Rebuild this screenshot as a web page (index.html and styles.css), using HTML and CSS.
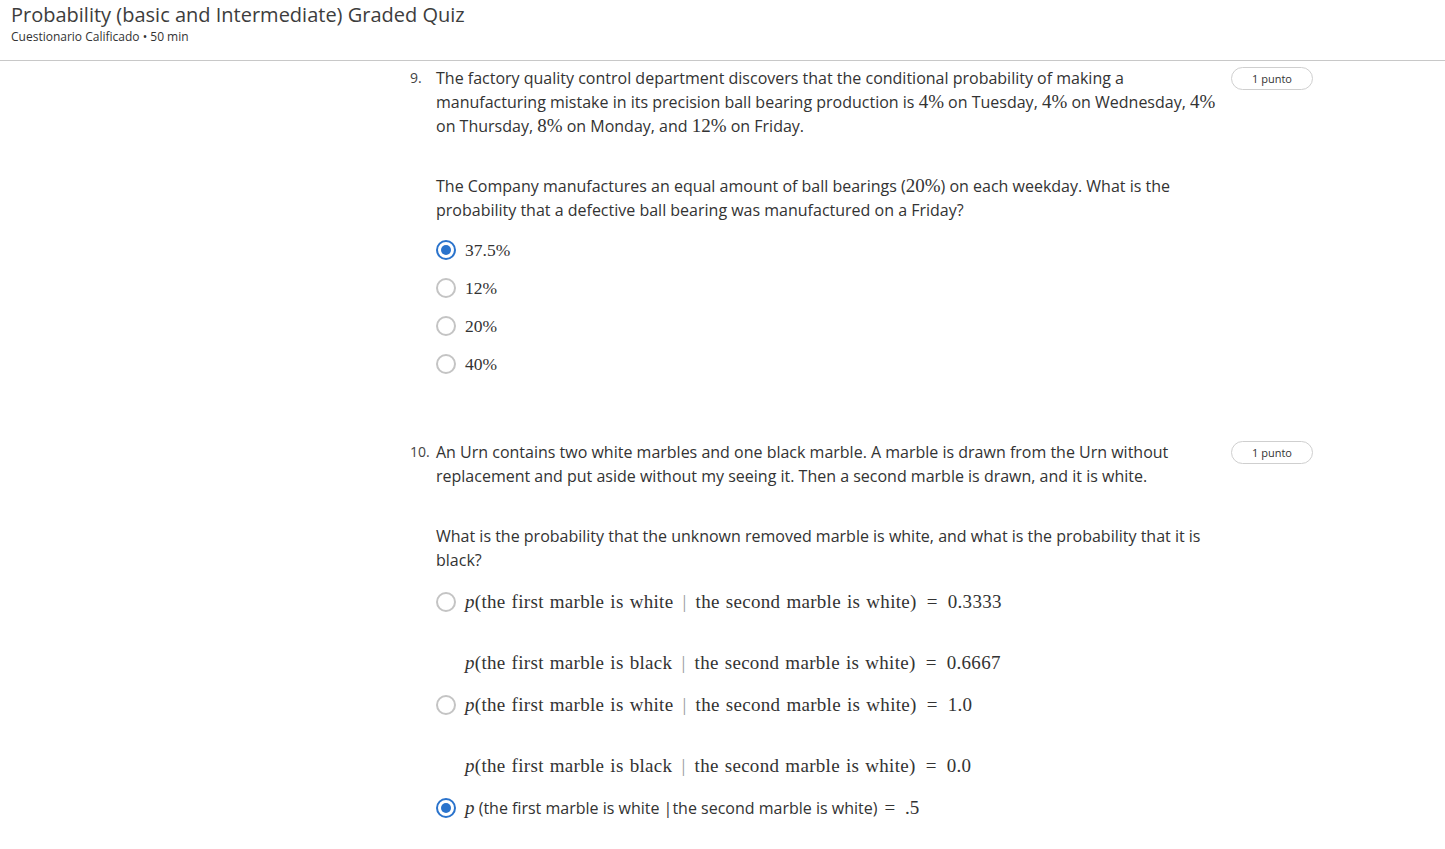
FILE: index.html
```html
<!DOCTYPE html>
<html lang="en">
<head>
<meta charset="utf-8">
<title>Probability (basic and Intermediate) Graded Quiz</title>
<link rel="stylesheet" href="styles.css">
</head>
<body>
<header class="top">
  <h1 class="title">Probability (basic and Intermediate) Graded Quiz</h1>
  <div class="sub">Cuestionario Calificado • 50 min</div>
</header>
<main class="quiz">
  <section class="q">
    <div class="num">9.</div>
    <div class="body">
      <p class="para">The factory quality control department discovers that the conditional probability of making a manufacturing mistake in its precision ball bearing production is <span class="m">4%</span> on Tuesday, <span class="m">4%</span> on Wednesday, <span class="m">4%</span> on Thursday, <span class="m">8%</span> on Monday, and <span class="m">12%</span> on Friday.</p>
      <p class="para">The Company manufactures an equal amount of ball bearings (<span class="m">20%</span>) on each weekday. What is the probability that a defective ball bearing was manufactured on a Friday?</p>
      <div class="opts">
        <div class="opt"><span class="radio on"></span><div class="otext"><p class="m">37.5%</p></div></div>
        <div class="opt"><span class="radio"></span><div class="otext"><p class="m">12%</p></div></div>
        <div class="opt"><span class="radio"></span><div class="otext"><p class="m">20%</p></div></div>
        <div class="opt"><span class="radio"></span><div class="otext"><p class="m">40%</p></div></div>
      </div>
    </div>
    <div class="pts"><span class="badge">1 punto</span></div>
  </section>

  <section class="q">
    <div class="num">10.</div>
    <div class="body">
      <p class="para">An Urn contains two white marbles and one black marble. A marble is drawn from the Urn without replacement and put aside without my seeing it. Then a second marble is drawn, and it is white.</p>
      <p class="para">What is the probability that the unknown removed marble is white, and what is the probability that it is black?</p>
      <div class="opts tall">
        <div class="opt"><span class="radio"></span><div class="otext">
          <p class="m wide"><i>p</i>(the first marble is white <span class="mid">|</span> the second marble is white) <span class="eq">=</span> 0.3333</p>
          <p class="m wide"><i>p</i>(the first marble is black <span class="mid">|</span> the second marble is white) <span class="eq">=</span> 0.6667</p>
        </div></div>
        <div class="opt"><span class="radio"></span><div class="otext">
          <p class="m wide"><i>p</i>(the first marble is white <span class="mid">|</span> the second marble is white) <span class="eq">=</span> 1.0</p>
          <p class="m wide"><i>p</i>(the first marble is black <span class="mid">|</span> the second marble is white) <span class="eq">=</span> 0.0</p>
        </div></div>
        <div class="opt"><span class="radio on"></span><div class="otext">
          <p class="mixed"><i class="m">p</i> (the first marble is white |the second marble is white) <span class="m tail"><span class="eq">=</span> .5</span></p>
        </div></div>
      </div>
    </div>
    <div class="pts"><span class="badge">1 punto</span></div>
  </section>
</main>
</body>
</html>
```

FILE: styles.css
```css
html, body {
  margin: 0;
  padding: 0;
  background: #fff;
}
body {
  font-family: "Open Sans", "Liberation Sans", sans-serif;
  color: #333;
}
.top {
  padding: 1px 11px 0;
  height: 59px;
  border-bottom: 1px solid #c8c8c8;
}
.title {
  margin: 0;
  font-size: 20px;
  font-weight: 400;
  line-height: 28px;
  color: #3d3d3d;
}
.sub {
  font-size: 12px;
  line-height: 16px;
  color: #333;
}
.quiz {
  padding: 5px 0 0 410px;
}
.q {
  display: flex;
  align-items: flex-start;
  margin-bottom: 64px;
}
.num {
  width: 26px;
  flex: none;
  font-size: 14px;
  line-height: 24px;
  color: #444;
}
.body {
  width: 790px;
  flex: none;
}
.para {
  margin: 0 0 36px;
  font-size: 16px;
  line-height: 24px;
}
.para:last-of-type {
  margin-bottom: 16px;
}
.m {
  font-family: "Liberation Serif", "DejaVu Serif", serif;
  font-size: 19px;
}
.pts {
  padding: 0 0 0 5px;
}
.badge {
  display: inline-block;
  box-sizing: border-box;
  width: 82px;
  height: 23px;
  border: 1px solid #cfcfcf;
  border-radius: 12px;
  font-size: 11px;
  line-height: 21px;
  text-align: center;
  color: #333;
}
.opts {
  display: flex;
  flex-direction: column;
  gap: 14px;
}
.opt {
  display: flex;
  align-items: flex-start;
}
.radio {
  box-sizing: border-box;
  flex: none;
  width: 20px;
  height: 20px;
  margin: 2px 9px 0 0;
  border: 2px solid #c4c4c4;
  border-radius: 50%;
  background: #fff;
  display: flex;
  align-items: center;
  justify-content: center;
}
.radio.on {
  border-color: #2a73cc;
}
.radio.on::after {
  content: "";
  width: 10px;
  height: 10px;
  border-radius: 50%;
  background: #2a73cc;
}
.otext p {
  margin: 0;
  line-height: 24px;
}
.otext p.m {
  font-size: 17.5px;
}
.tall .otext p {
  line-height: 28px;
}
.tall .otext p.wide {
  font-size: 19px;
  letter-spacing: 0.3px;
  word-spacing: 1px;
}
.tall .radio {
  margin-top: 4px;
}
.otext p + p {
  margin-top: 33px;
}
.mid {
  color: #999;
  padding: 0 3px;
}
.eq {
  padding: 0 4px;
}
.mixed {
  font-size: 16px;
}
.mixed .m {
  font-size: 19px;
}
.tail .eq {
  padding: 0 5px 0 3px;
}
```
